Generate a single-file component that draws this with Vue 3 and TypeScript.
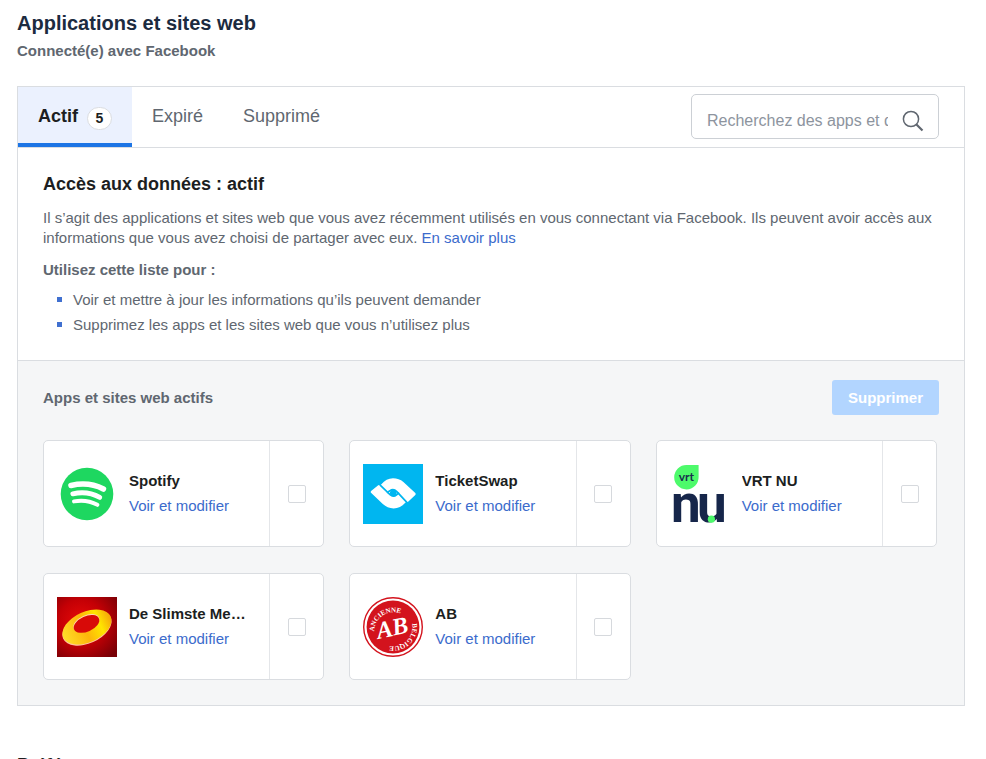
<script setup lang="ts">
import { ref } from 'vue'

interface ConnectedApp {
  id: string
  name: string
}

const tabs = [
  { id: 'active', label: 'Actif', count: 5 },
  { id: 'expired', label: 'Expiré' },
  { id: 'removed', label: 'Supprimé' },
]

const apps: ConnectedApp[] = [
  { id: 'spotify', name: 'Spotify' },
  { id: 'ticketswap', name: 'TicketSwap' },
  { id: 'vrt', name: 'VRT NU' },
  { id: 'slimste', name: 'De Slimste Mens ter Wereld' },
  { id: 'ab', name: 'AB' },
]

const activeTab = ref('active')
const selected = ref<string[]>([])
const query = ref('')
</script>

<template>
  <main class="page">
    <header class="heading">
      <h1>Applications et sites web</h1>
      <p>Connecté(e) avec Facebook</p>
    </header>

    <section class="panel">
      <div class="toolbar">
        <nav class="tabs">
          <button
            v-for="tab in tabs"
            :key="tab.id"
            type="button"
            class="tab"
            :class="{ active: tab.id === activeTab }"
            @click="activeTab = tab.id"
          >
            <span>{{ tab.label }}</span>
            <span v-if="tab.count" class="count">{{ tab.count }}</span>
          </button>
        </nav>
        <label class="search">
          <input
            v-model="query"
            type="text"
            placeholder="Recherchez des apps et des sites web"
            aria-label="Recherchez des apps et des sites web"
          />
          <svg width="22" height="22" viewBox="0 0 22 22" aria-hidden="true">
            <circle cx="9" cy="9" r="7.6" fill="none" stroke="#606770" stroke-width="1.5" />
            <path d="M14.5 14.5L20.5 20.5" fill="none" stroke="#606770" stroke-width="2.2" />
          </svg>
        </label>
      </div>

      <div class="intro">
        <h2>Accès aux données : actif</h2>
        <p>
          Il s’agit des applications et sites web que vous avez récemment utilisés en vous connectant via Facebook. Ils
          peuvent avoir accès aux informations que vous avez choisi de partager avec eux.
          <a href="#">En savoir plus</a>
        </p>
        <h3>Utilisez cette liste pour :</h3>
        <ul>
          <li>Voir et mettre à jour les informations qu’ils peuvent demander</li>
          <li>Supprimez les apps et les sites web que vous n’utilisez plus</li>
        </ul>
      </div>

      <div class="listing">
        <div class="listing-head">
          <h3>Apps et sites web actifs</h3>
          <button type="button" class="remove" :disabled="selected.length === 0">Supprimer</button>
        </div>

        <div class="grid">
          <article v-for="app in apps" :key="app.id" class="card">
            <div class="info">
              <svg class="logo" width="60" height="60" viewBox="0 0 60 60" aria-hidden="true">
                <g v-if="app.id === 'spotify'">
                  <circle cx="30" cy="30" r="26.3" fill="#1ed760" />
                  <g fill="none" stroke="#fff" stroke-linecap="round">
                    <path d="M14 21.4Q32 17.4 46.4 25" stroke-width="5.6" />
                    <path d="M15.8 29.8Q30.5 26.5 42.8 33.4" stroke-width="4.8" />
                    <path d="M17 37.4Q29.5 35 40.4 40.8" stroke-width="4" />
                  </g>
                </g>
                <g v-else-if="app.id === 'ticketswap'">
                  <rect width="60" height="60" fill="#00b6f0" />
                  <path
                    fill="#fff"
                    d="M8 28.7Q7.2 27.8 8.1 26.9L15.2 21.2Q16.2 20.6 17.1 21.3L18.4 20.2C21.6 16.5 25.5 14.2 30 14.2C34 14.2 37.5 15.4 40.4 18L52.3 29Q53.2 30 52.3 30.9L45.4 37.6Q44.4 38.5 43.4 37.7L42 39C39.2 42.6 35 44.4 30.6 44.4C26.4 44.4 22.8 42.8 19.8 40Z"
                  />
                  <g fill="none" stroke="#00b6f0" stroke-width="1.7" stroke-linecap="round">
                    <path d="M17.2 21.2L27 30.7Q30.4 33.6 33.6 30.8L35.6 29.2" />
                    <path d="M43.4 37.8L33.8 27.6Q30.4 24 26.8 26.8L24.6 28.4" />
                  </g>
                  <circle cx="30.3" cy="29.1" r="3.4" fill="#00b6f0" />
                </g>
                <g v-else-if="app.id === 'vrt'">
                  <path d="M16.6 1H28.6V13A12.2 12.2 0 1 1 16.6 1Z" fill="#4dfa6b" />
                  <text x="16.4" y="16.6" text-anchor="middle" class="vrt-small">vrt</text>
                  <text x="1" y="58.2" class="vrt-large">n</text>
                  <text x="27" y="58" class="vrt-large">u</text>
                  <circle cx="41.4" cy="55.2" r="3.6" fill="#4dfa6b" />
                </g>
                <g v-else-if="app.id === 'slimste'">
                  <defs>
                    <radialGradient id="slimste-back" cx="0.4" cy="0.42" r="0.75">
                      <stop offset="0" stop-color="#e80a08" />
                      <stop offset="0.5" stop-color="#c40005" />
                      <stop offset="1" stop-color="#780006" />
                    </radialGradient>
                    <linearGradient id="slimste-ring" x1="0" y1="0" x2="1" y2="0">
                      <stop offset="0" stop-color="#ffdd2a" />
                      <stop offset="0.45" stop-color="#fdb50a" />
                      <stop offset="0.75" stop-color="#ffe500" />
                      <stop offset="1" stop-color="#f5a30a" />
                    </linearGradient>
                  </defs>
                  <rect width="60" height="60" fill="url(#slimste-back)" />
                  <g transform="rotate(-24 30 30)">
                    <ellipse cx="29.5" cy="31" rx="26" ry="15.3" fill="#ffc1a0" />
                    <ellipse cx="30" cy="30" rx="26" ry="15.3" fill="url(#slimste-ring)" />
                    <ellipse cx="31" cy="26.2" rx="13.8" ry="7.8" fill="#ffd7b0" />
                    <ellipse cx="30.8" cy="27" rx="13.6" ry="7.6" fill="#d80a08" />
                  </g>
                </g>
                <g v-else>
                  <defs>
                    <path id="ab-upper" d="M11.3 34.5A19.2 19.2 0 0 1 49.2 30" />
                    <path id="ab-lower" d="M49 26.6A19.2 19.2 0 0 1 14 40.6" />
                  </defs>
                  <circle cx="30" cy="30" r="29.3" fill="#fff" stroke="#d3131d" stroke-width="1.4" />
                  <circle cx="30" cy="30" r="26.4" fill="#d3131d" />
                  <text class="ab-ring"><textPath href="#ab-upper">ANCIENNE</textPath></text>
                  <text class="ab-ring"><textPath href="#ab-lower">BELGIQUE</textPath></text>
                  <text x="29" y="38.6" text-anchor="middle" class="ab-main" transform="rotate(-12 30 30)">AB</text>
                </g>
              </svg>
              <div class="details">
                <h4 :id="`name-${app.id}`">{{ app.name }}</h4>
                <a href="#">Voir et modifier</a>
              </div>
            </div>
            <label class="pick">
              <input v-model="selected" type="checkbox" :value="app.id" :aria-labelledby="`name-${app.id}`" />
            </label>
          </article>
        </div>
      </div>
    </section>

    <h2 class="next">Préférences</h2>
  </main>
</template>

<style>
body {
  background: #fff;
}
</style>

<style scoped>
.page {
  padding: 11px 21px 0 17px;
  font-family: 'Liberation Sans', Arial, sans-serif;
  font-size: 15px;
  line-height: 20px;
  color: #606770;
}
h1,
h2,
h3,
h4,
p,
ul {
  margin: 0;
  padding: 0;
}
a {
  color: #3b6bcc;
  text-decoration: none;
}
button,
input {
  font-family: inherit;
}
h1 {
  font-size: 20px;
  line-height: 24px;
  color: #1c2b3f;
}
.heading p {
  margin-top: 6px;
  font-weight: bold;
}
.panel {
  margin-top: 25px;
  border: 1px solid #dadde1;
}
.toolbar {
  display: flex;
  justify-content: space-between;
  align-items: flex-start;
  border-bottom: 1px solid #dadde1;
  padding-right: 25px;
}
.tabs {
  display: flex;
}
.tab {
  display: flex;
  align-items: center;
  gap: 9px;
  height: 60px;
  padding: 2px 20px 0;
  border: 0;
  border-bottom: 4px solid transparent;
  background: none;
  font-size: 18px;
  color: #606770;
}
.tab.active {
  border-bottom-color: #1d75e5;
  background: #ebf1fe;
  font-weight: bold;
  color: #1c1e21;
}
.count {
  width: 23px;
  margin-top: 4px;
  border: 1px solid #dadde1;
  border-radius: 12px;
  background: #fff;
  font-size: 14px;
  line-height: 21px;
}
.search {
  display: flex;
  align-items: center;
  gap: 14px;
  box-sizing: border-box;
  width: 248px;
  height: 45px;
  margin-top: 7px;
  padding: 9px 14px 0 15px;
  border: 1px solid #ccd0d5;
  border-radius: 5px;
}
.search input {
  flex: 1;
  min-width: 0;
  padding: 0;
  border: 0;
  outline: 0;
  background: none;
  font-size: 16px;
}
.search input::placeholder {
  color: #8d949e;
}
.intro {
  padding: 24px 25px 23px;
  border-bottom: 1px solid #dadde1;
}
h2 {
  font-size: 18px;
  line-height: 24px;
  color: #1c1e21;
}
.intro p {
  margin-top: 12px;
}
h3 {
  font-size: 15px;
}
.intro h3 {
  margin-top: 12px;
}
ul {
  margin-top: 7px;
  list-style: none;
}
li {
  display: flex;
  align-items: center;
  gap: 11px;
  padding-left: 14px;
  line-height: 25px;
}
li::before {
  content: '';
  width: 5px;
  height: 5px;
  background: #4070d0;
}
.listing {
  padding: 19px 27px 25px 25px;
  background: #f5f6f7;
}
.listing-head {
  display: flex;
  justify-content: space-between;
  align-items: center;
  margin-right: -2px;
}
.remove {
  height: 35px;
  padding: 0 16px;
  border: 0;
  border-radius: 3px;
  background: #b2d5ff;
  font-size: 15px;
  font-weight: bold;
  color: #fff;
}
.grid {
  display: grid;
  grid-template-columns: repeat(3, minmax(0, 1fr));
  gap: 26px 25px;
  margin-top: 25px;
}
.card {
  display: flex;
  height: 105px;
  border: 1px solid #dadde1;
  border-radius: 5px;
  background: #fff;
}
.info {
  display: flex;
  align-items: center;
  gap: 12px;
  flex: 1;
  min-width: 0;
  padding: 0 23px 0 13px;
}
.logo {
  flex: none;
}
.details {
  min-width: 0;
  padding-bottom: 2px;
  line-height: 25px;
}
h4 {
  overflow: hidden;
  font-size: 15px;
  text-overflow: ellipsis;
  white-space: nowrap;
  color: #1c1e21;
}
.pick {
  display: flex;
  align-items: center;
  justify-content: center;
  width: 53px;
  border-left: 1px solid #e4e6e9;
}
.pick input {
  appearance: none;
  width: 18px;
  height: 18px;
  margin: 0;
  border: 1px solid #d6d9dd;
  border-radius: 2px;
  background: #fff;
}
.pick input:checked {
  background: #1d75e5;
}
.vrt-small {
  font: 700 12px Lato, sans-serif;
  fill: #17304d;
}
.vrt-large {
  font: 700 53px Roboto, sans-serif;
  fill: #16264a;
}
.ab-ring {
  font: 700 7px 'Liberation Serif', serif;
  fill: #fff;
}
.ab-main {
  font: italic 700 24px 'Liberation Serif', serif;
  fill: #fff;
}
.next {
  margin-top: 47px;
}
</style>
